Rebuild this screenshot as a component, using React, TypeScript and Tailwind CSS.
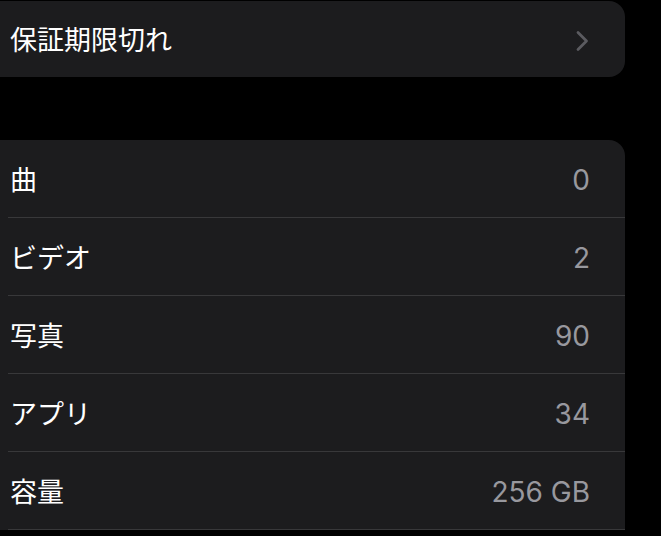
const rows = [
  { label: "曲", value: "0" },
  { label: "ビデオ", value: "2" },
  { label: "写真", value: "90" },
  { label: "アプリ", value: "34" },
  { label: "容量", value: "256 GB" },
];

function Chevron() {
  return (
    <svg width="15" height="22" viewBox="0 0 15 22" fill="none" aria-hidden="true">
      <path d="M3 2.5l8.5 8.5-8.5 8.5" stroke="#5b5b60" strokeWidth="2.8" strokeLinecap="round" strokeLinejoin="round" />
    </svg>
  );
}

export default function App() {
  return (
    <div
      className="h-[536px] w-[661px] overflow-hidden bg-black"
      style={{ fontFamily: '"Inter", "Noto Sans CJK JP", sans-serif' }}
    >
      <div className="pt-px">
        <div className="flex h-[76px] w-[625px] items-center justify-between rounded-r-[16px] bg-[#1c1c1e] pl-[10px] pr-[35px] pt-[3px]">
          <span className="text-[27px] leading-none text-white">保証期限切れ</span>
          <Chevron />
        </div>
      </div>

      <div className="mt-[63px] w-[625px] rounded-tr-[16px] bg-[#1c1c1e]">
        {rows.map((row) => (
          <div key={row.label} className="pl-[8px]">
            <div className="flex h-[77px] items-center justify-between pl-[2px] pr-[35px] pt-[3px]">
              <span className="text-[27px] leading-none text-white">{row.label}</span>
              <span className="text-[28px] leading-none text-[#98989e]">{row.value}</span>
            </div>
            <div className="h-px bg-[#38383a]" />
          </div>
        ))}
      </div>
    </div>
  );
}
